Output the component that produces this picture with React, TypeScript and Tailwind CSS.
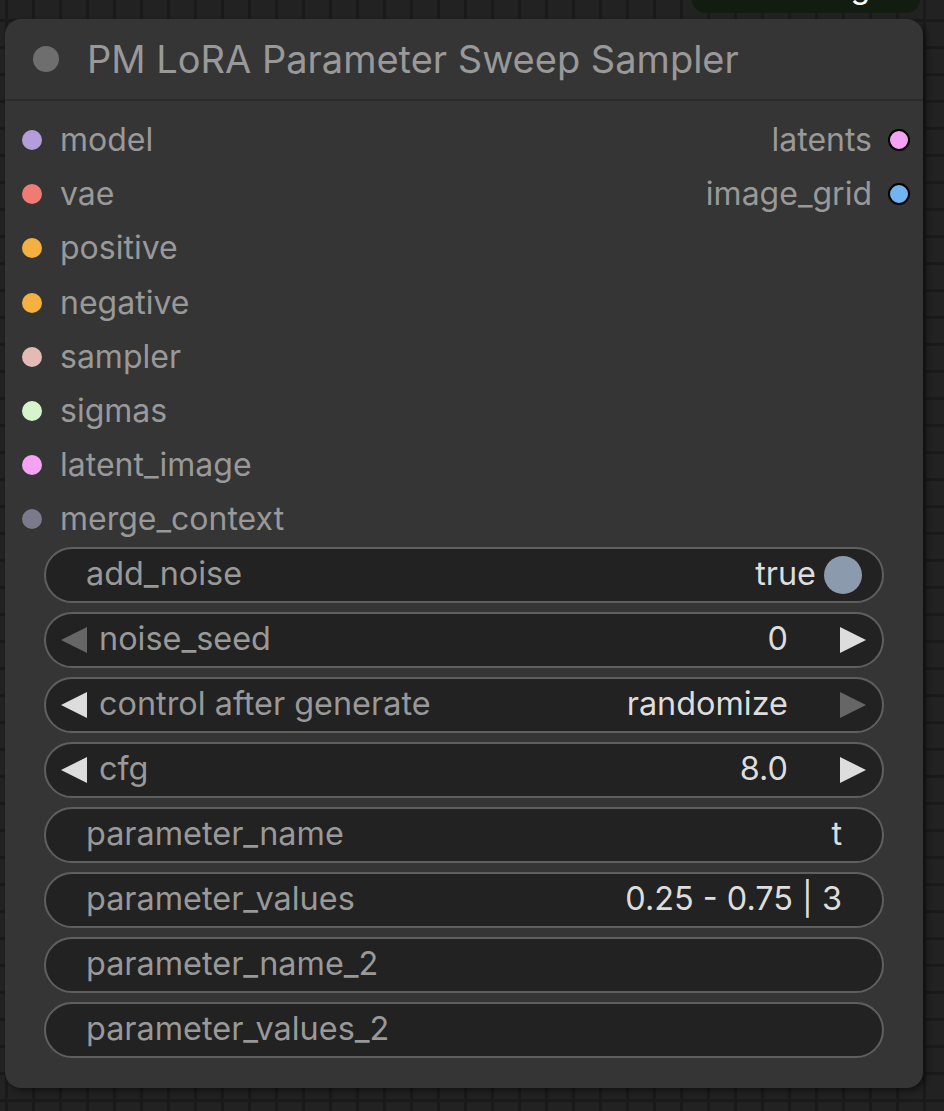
import React from 'react';

type Slot = { name: string; color: string };

const inputs: Slot[] = [
  { name: 'model', color: '#b39ddb' },
  { name: 'vae', color: '#f07b72' },
  { name: 'positive', color: '#f5b042' },
  { name: 'negative', color: '#f5b042' },
  { name: 'sampler', color: '#e4bab4' },
  { name: 'sigmas', color: '#d5f6cd' },
  { name: 'latent_image', color: '#f4a3f4' },
  { name: 'merge_context', color: '#7a7a8c' },
];

const outputs: Slot[] = [
  { name: 'latents', color: '#f4a3f4' },
  { name: 'image_grid', color: '#72b4f2' },
];

const Arrow = ({ dir, dim }: { dir: 'left' | 'right'; dim?: boolean }) => (
  <svg width="26" height="26" viewBox="0 0 26 26" className="shrink-0">
    <polygon
      points={dir === 'left' ? '0,13 26,0 26,26' : '26,13 0,0 0,26'}
      fill={dim ? '#666666' : '#dddddd'}
    />
  </svg>
);

const Widget = ({ children }: { children: React.ReactNode }) => (
  <div className="h-[56px] rounded-full border-2 border-[#5f5f5f] bg-[#222222] flex items-center">
    {children}
  </div>
);

const NumberWidget = ({
  label,
  value,
  dimLeft,
  dimRight,
}: {
  label: string;
  value: string;
  dimLeft?: boolean;
  dimRight?: boolean;
}) => (
  <Widget>
    <div className="pl-[15px]">
      <Arrow dir="left" dim={dimLeft} />
    </div>
    <span className="ml-[12px] text-[#999999]">{label}</span>
    <span className="ml-auto text-[#dddddd]">{value}</span>
    <div className="ml-[52px] pr-[16px]">
      <Arrow dir="right" dim={dimRight} />
    </div>
  </Widget>
);

const TextWidget = ({ label, value }: { label: string; value?: React.ReactNode }) => (
  <Widget>
    <span className="pl-[40px] text-[#999999]">{label}</span>
    {value && <span className="ml-auto pr-[40px] text-[#dddddd]">{value}</span>}
  </Widget>
);

export default function App() {
  return (
    <div className="relative w-[944px] h-[1111px] overflow-hidden bg-[#222222] bg-[linear-gradient(#1a1a1a_3px,transparent_3px),linear-gradient(90deg,#1a1a1a_3px,transparent_3px)] bg-size-[27px_27px] bg-position-[5px_19px] font-['Inter','Noto_Sans',sans-serif] pt-[19px] pl-[5px]">
      {/* neighbouring node peeking in at the top */}
      <div className="absolute top-[-30px] left-[692px] w-[228px] h-[43px] rounded-[14px] bg-[#131c11] flex items-end justify-end pr-[50px]">
        <span className="mb-[7px] text-[32px] leading-[39px] text-white">Running</span>
      </div>

      <div className="w-[918px] rounded-[16px] bg-[#353535] shadow-[3px_3px_6px_rgba(0,0,0,0.45)] pb-[30px]">
        {/* title bar */}
        <div className="h-[82px] flex items-center pl-[28px] border-b-2 border-[#2c2c2c]">
          <div className="w-[26px] h-[26px] rounded-full bg-[#6e6e6e]" />
          <span className="ml-[28px] text-[38px] text-[#999999]">
            PM LoRA Parameter Sweep Sampler
          </span>
        </div>

        {/* slots */}
        <div className="flex pt-[12px] text-[32px]">
          <div className="flex-1">
            {inputs.map((s) => (
              <div key={s.name} className="h-[54.2px] flex items-center pl-[17px]">
                <div className="w-[20px] h-[20px] rounded-full" style={{ backgroundColor: s.color }} />
                <span className="ml-[18px] text-[#999999]">{s.name}</span>
              </div>
            ))}
          </div>
          <div>
            {outputs.map((s) => (
              <div key={s.name} className="h-[54.2px] flex items-center justify-end pr-[13px]">
                <span className="mr-[16px] text-[#999999]">{s.name}</span>
                <div
                  className="w-[22px] h-[22px] rounded-full border-2 border-black"
                  style={{ backgroundColor: s.color }}
                />
              </div>
            ))}
          </div>
        </div>

        {/* widgets */}
        <div className="px-[39px] flex flex-col gap-[9px] text-[32.4px]">
          <Widget>
            <span className="pl-[40px] text-[#999999]">add_noise</span>
            <span className="ml-auto text-[#dddddd]">true</span>
            <div className="ml-[8px] mr-[20px] w-[38px] h-[38px] rounded-full bg-[#8c9aad]" />
          </Widget>
          <NumberWidget label="noise_seed" value="0" dimLeft />
          <NumberWidget label="control after generate" value="randomize" dimRight />
          <NumberWidget label="cfg" value="8.0" />
          <TextWidget label="parameter_name" value="t" />
          <TextWidget label="parameter_values" value="0.25 - 0.75 | 3" />
          <TextWidget label="parameter_name_2" />
          <TextWidget label="parameter_values_2" />
        </div>
      </div>
    </div>
  );
}
